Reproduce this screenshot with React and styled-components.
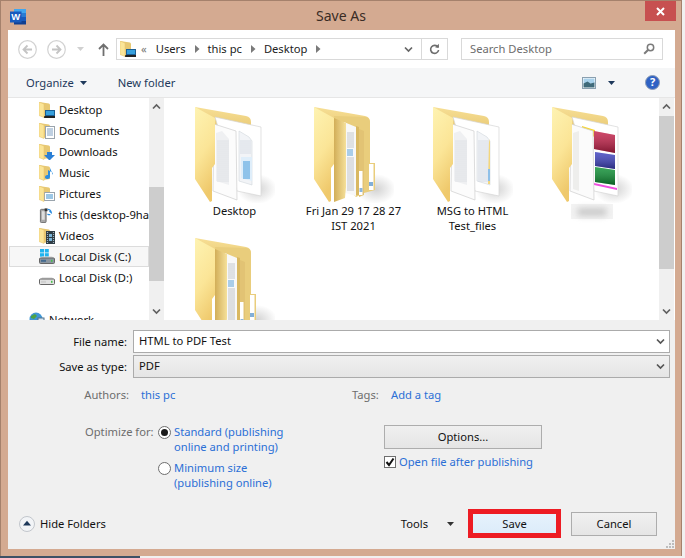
import React from 'react';
import styled, { createGlobalStyle } from 'styled-components';

const Global = createGlobalStyle`
  html, body { margin: 0; padding: 0; background: #f1f1f1; }
  body { font-family: "Noto Sans", "Open Sans", sans-serif; font-size: 11.2px; color: #111; }
`;

const Page = styled.div`width: 685px; height: 558px; overflow: hidden; background: #f1f1f1; display: flex; flex-direction: column;`;
const Win = styled.div`box-sizing: border-box; width: 682px; height: 556px; border: 1px solid #a5816c; border-bottom: 0; background: #d4aa91; display: flex; flex-direction: column;`;
const TaskSliver = styled.div`width: 140px; height: 2px; background: #3d5166;`;
const TitleBar = styled.div`position: relative; height: 29px; flex: none; display: flex; align-items: center; justify-content: center; padding-bottom: 1px; box-sizing: border-box;`;
const WordSlot = styled.div`position: absolute; left: 9px; top: 7px; width: 17px; height: 17px;`;
const Title = styled.div`font-size: 14px; color: #3a2c25; letter-spacing: 0;`;
const Close = styled.div`position: absolute; right: 5px; top: 0; width: 31px; height: 20px; background: #c75050; display: flex; align-items: center; justify-content: center;`;
const Content = styled.div`width: 667px; height: 519px; margin-left: 7px; background: #fff; display: flex; flex-direction: column; position: relative;`;

const NavRow = styled.div`height: 38px; flex: none; display: flex; align-items: center; padding: 0 12px 0 10px; box-sizing: border-box; background: #fff;`;
const RoundBtn = styled.div`width: 19px; height: 19px; margin-right: 10px; display: flex;`;
const NavCaret = styled.div`width: 7px; margin: 0 14px 0 1px; display: flex;`;
const UpSlot = styled.div`width: 11px; margin-right: 7px; display: flex;`;
const Address = styled.div`box-sizing: border-box; width: 332px; height: 22px; border: 1px solid #d9d9d9; display: flex; align-items: center; margin-right: 13px; padding-left: 3px;`;
const Crumbs = styled.div`flex: 1; display: flex; align-items: center; font-size: 11.2px; color: #222; padding-bottom: 1px;`;
const Crumb = styled.span`margin-right: 9px;`;
const CrumbIcon = styled.span`margin-right: 5px; display: flex;`;
const CrumbMore = styled.span`margin-right: 9px; color: #777;`;
const Chev = styled.span`margin-right: 8px; display: flex;`;
const Divider = styled.div`width: 25px; height: 20px; border-left: 1px solid #d9d9d9; display: flex; align-items: center; justify-content: center;`;
const AddrDrop = styled.div`width: 17px; display: flex; margin-right: 0;`;
const Search = styled.div`box-sizing: border-box; width: 202px; height: 22px; border: 1px solid #d9d9d9; display: flex; align-items: center; justify-content: space-between; padding: 0 7px 1px 8px; color: #6d6d6d; font-size: 11.2px;`;

const Toolbar = styled.div`height: 30px; flex: none; box-sizing: border-box; background: #f5f6f7; border-bottom: 1px solid #e6e6e6; display: flex; align-items: center; padding: 0 15px 0 18px; color: #1e395b; font-size: 11.2px;`;
const ToolItem = styled.div`display: flex; align-items: center; gap: 6px; margin-right: 31px;`;
const ToolRight = styled.div`margin-left: auto; display: flex; align-items: center;`;
const ViewCaret = styled.span`margin: 0 30px 0 12px; display: flex;`;

const Main = styled.div`height: 222px; flex: none; display: flex; overflow: hidden; background: #fff;`;
const NavPane = styled.div`width: 141px; flex: none; overflow: hidden; padding-top: 1px; box-sizing: border-box;`;
const NavItem = styled.div`box-sizing: border-box; height: 21px; display: flex; align-items: center; white-space: nowrap; overflow: hidden; margin-left: 1px;
  padding-left: ${p => p.$indent}px; gap: 4px; border: 1px solid ${p => (p.$sel ? '#dcdcdc' : 'transparent')}; background: ${p => (p.$sel ? '#f7f7f7' : 'transparent')}; border-right: ${p => (p.$sel ? '1px solid #dcdcdc' : '0')};`;
const NavGap = styled.div`height: 21px;`;
const Scroll = styled.div`width: 15px; flex: none; background: #f0f0f0; display: flex; flex-direction: column; align-items: stretch;`;
const ScrollBtn = styled.div`height: 17px; flex: none; display: flex; align-items: center; justify-content: center;`;
const Track = styled.div`flex: 1; position: relative;`;
const Thumb = styled.div`position: absolute; left: 0; right: 0; top: ${p => p.$top}px; height: ${p => p.$h}px; background: #cdcdcd;`;
const Files = styled.div`flex: 1; margin-left: 2px; padding: 9px 0 0 9px; display: grid; grid-template-columns: repeat(4, 119px); grid-auto-rows: 131px; overflow: hidden; align-content: start;`;
const FileCell = styled.div`display: flex; flex-direction: column; align-items: center;`;
const FileName = styled.div`width: 110px; text-align: center; line-height: 15px; margin-top: 0; color: #111;`;
const Redacted = styled.div`width: 42px; height: 15px; margin-top: 1px; background: #f3f3f3; display: flex; align-items: center; justify-content: center;`;
const Smudge = styled.div`width: 30px; height: 8px; border-radius: 4px; background: #c9c9c9; filter: blur(3px);`;
const LeftEdge = styled.div`width: 1px; flex: none; background: #fff;`;

const Form = styled.div`flex: 1; background: #f0f0f0; display: flex; flex-direction: column; padding: 10px 0 11px; box-sizing: border-box; position: relative;`;
const FieldRow = styled.div`display: flex; align-items: center; margin-bottom: 2px; height: 23px;`;
const FieldLabel = styled.div`width: 119px; text-align: right; margin-right: 6px; color: #111; padding-bottom: 1px;`;
const Field = styled.div`box-sizing: border-box; width: 537px; height: 23px; border: 1px solid #ababab; display: flex; align-items: center; justify-content: space-between; padding: 0 4px 2px 5px;
  background: ${p => (p.$select ? 'linear-gradient(#f0f0f0, #e5e5e5)' : '#fff')};`;
const FieldChev = styled.span`display: flex; margin-top: 2px;`;
const MetaRow = styled.div`display: grid; grid-template-columns: 121px 223px 39px auto; margin-top: 7px; height: 15px; line-height: 15px; align-items: center;`;
const MetaLabel = styled.div`color: #6d6d6d; text-align: ${p => (p.$left ? 'left' : 'right')};`;
const Link = styled.div`color: #2b6fd6; line-height: 15px; padding-left: ${p => p.$indent || 0}px;`;
const Options = styled.div`display: grid; grid-template-columns: 299px 158px; padding-left: 77px; margin-top: 23px;`;
const OptLeft = styled.div`display: grid; grid-template-columns: 73px 16px auto; row-gap: 6px; align-items: start; margin-top: -1px;`;
const OptLabel = styled.div`color: #6d6d6d; line-height: 15px;`;
const Radio = styled.div`box-sizing: border-box; width: 13px; height: 13px; margin-top: 2px; border-radius: 50%; border: 1px solid #6e6e6e; background: #fff; display: flex; align-items: center; justify-content: center;`;
const RadioDot = styled.div`width: 7px; height: 7px; border-radius: 50%; background: #1a1a1a;`;
const OptRight = styled.div`display: flex; flex-direction: column;`;
const Button = styled.div`box-sizing: border-box; height: 24px; width: ${p => p.$w}px; padding-bottom: 1px; border: 1px solid #adadad; background: linear-gradient(#f0f0f0, #e5e5e5); display: flex; align-items: center; justify-content: center; color: #111;`;
const CheckRow = styled.div`display: flex; align-items: center; gap: 3px; margin-top: 5px; height: 15px;`;
const Check = styled.div`box-sizing: border-box; width: 12px; height: 12px; margin-top: 1px; border: 1px solid #6e6e6e; background: #fff; display: flex; align-items: center; justify-content: center;`;
const Bottom = styled.div`margin-top: auto; display: flex; align-items: center; padding: 0 18px 0 11px;`;
const HideFolders = styled.div`display: flex; align-items: center; gap: 5px; color: #111;`;
const Tools = styled.div`margin-left: auto; display: flex; align-items: center; gap: 19px; margin-right: 14px; color: #111;`;
const RedFrame = styled.div`border: 5px solid #ed1c24; margin-right: 10px; display: flex;`;
const SaveBtn = styled.div`box-sizing: border-box; width: 83px; height: 19px; background: linear-gradient(#e6f2fc, #dcecfa); display: flex; align-items: center; justify-content: center; color: #111;`;
const Grip = styled.div`position: absolute; right: 1px; bottom: 1px; width: 8px; height: 8px; display: flex;`;
const DefsHolder = styled.svg`position: absolute; width: 0; height: 0;`;

const Tri = ({ color = '#1e395b', w = 7, h = 4 }) => (
  <svg width={w} height={h} viewBox="0 0 7 4"><path d="M0 0h7L3.5 4z" fill={color} /></svg>
);
const Caret = () => (
  <svg width="5" height="8" viewBox="0 0 5 8"><path d="M0 0l4.5 4L0 8z" fill="#7a7a7a" /></svg>
);
const ChevDown = ({ color = '#555' }) => (
  <svg width="9" height="7" viewBox="0 0 9 7"><path d="M1 1.5l3.5 3.5L8 1.5" fill="none" stroke={color} strokeWidth="1.7" /></svg>
);
const ChevUp = () => (
  <svg width="9" height="7" viewBox="0 0 9 7"><path d="M1 5.5L4.5 2 8 5.5" fill="none" stroke="#606060" strokeWidth="1.7" /></svg>
);
const CircleArrow = ({ flip }) => (
  <svg width="19" height="19" viewBox="0 0 19 19">
    <circle cx="9.5" cy="9.5" r="8.8" fill="#fff" stroke="#d2d2d2" strokeWidth="1.2" />
    <path d={flip ? 'M5 9.5h8M9.5 5.5l4 4-4 4' : 'M14 9.5H6M9.5 5.5l-4 4 4 4'} fill="none" stroke="#c4c4c4" strokeWidth="1.8" />
  </svg>
);
const Up = () => (
  <svg width="11" height="13" viewBox="0 0 11 13"><path d="M5.5 13V2M1 6l4.5-4.5L10 6" fill="none" stroke="#6f6f6f" strokeWidth="1.8" /></svg>
);
const Refresh = () => (
  <svg width="11" height="12" viewBox="0 0 11 12">
    <path d="M9 4.2A4 4 0 1 0 9.6 7" fill="none" stroke="#6e6e6e" strokeWidth="1.6" />
    <path d="M6.2 4.6L10 4.8 9.8 .8z" fill="#6e6e6e" />
  </svg>
);
const Magnifier = () => (
  <svg width="12" height="12" viewBox="0 0 12 12">
    <circle cx="7.5" cy="4.5" r="3.2" fill="none" stroke="#7b7b7b" strokeWidth="1.5" />
    <path d="M5 7L1.2 10.8" stroke="#7b7b7b" strokeWidth="2" />
  </svg>
);
const ViewIcon = () => (
  <svg width="14" height="12" viewBox="0 0 14 12">
    <rect x=".5" y=".5" width="13" height="11" fill="#fff" stroke="#8aa0b0" />
    <rect x="1.5" y="1.5" width="11" height="5" fill="#a9d2ec" />
    <path d="M1.5 6.5l4-2 3 2 4-1v5h-11z" fill="#3f6a7a" />
  </svg>
);
const Help = () => (
  <svg width="15" height="15" viewBox="0 0 15 15">
    <circle cx="7.5" cy="7.5" r="7" fill="#2f62c4" stroke="#8d9db5" />
    <text x="7.5" y="11.4" textAnchor="middle" fontSize="11" fontWeight="700" fontFamily="Noto Sans" fill="#fff">?</text>
  </svg>
);
const Word = () => (
  <svg width="17" height="17" viewBox="0 0 17 17">
    <rect x="4" y="1" width="12" height="4" fill="#41a5ee" />
    <rect x="4" y="5" width="12" height="4" fill="#2b7cd3" />
    <rect x="4" y="9" width="12" height="4" fill="#185abd" />
    <rect x="4" y="13" width="12" height="3.5" fill="#103f91" />
    <rect x="0" y="3.5" width="11.5" height="11" fill="#185abd" />
    <text x="5.8" y="12.3" textAnchor="middle" fontSize="9.5" fontWeight="700" fontFamily="Liberation Sans" fill="#fff">W</text>
  </svg>
);

const Defs = () => (
  <DefsHolder aria-hidden="true">
    <defs>
      <linearGradient id="flap" x1="0" y1="0" x2="0.3" y2="1">
        <stop offset="0" stopColor="#fef3b2" />
        <stop offset="0.55" stopColor="#fbe597" />
        <stop offset="1" stopColor="#efc96c" />
      </linearGradient>
      <linearGradient id="backf" x1="0" y1="0" x2="0" y2="1">
        <stop offset="0" stopColor="#f7df95" />
        <stop offset="1" stopColor="#e4c26a" />
      </linearGradient>
      <linearGradient id="layer" x1="0" y1="0" x2="1" y2="0">
        <stop offset="0" stopColor="#d2ae58" />
        <stop offset="1" stopColor="#f5e09a" />
      </linearGradient>
      <linearGradient id="roll" x1="0" y1="0" x2="0" y2="1">
        <stop offset="0" stopColor="#fff" stopOpacity="0.18" />
        <stop offset="1" stopColor="#000" stopOpacity="0.35" />
      </linearGradient>
      <radialGradient id="shade">
        <stop offset="0" stopColor="#8a8a8a" stopOpacity="0.38" />
        <stop offset="1" stopColor="#8a8a8a" stopOpacity="0" />
      </radialGradient>
    </defs>
  </DefsHolder>
);

const Lines = ({ x, y, w, n, step = 2, color = '#cdd3da' }) => (
  <g stroke={color} strokeWidth="0.9">
    {Array.from({ length: n }, (_, i) => (
      <path key={i} d={`M${x} ${y + i * step}h${w}`} />
    ))}
  </g>
);

const Flap = () => <path d="M0 0L20 11V57L17 61V94L15 95L0 72Z" fill="url(#flap)" />;
const BackF = () => <path d="M0 0L51 9Q56 10 56 15V30H20Z" fill="url(#backf)" />;
const Shadow = () => <ellipse cx="62" cy="82" rx="20" ry="15" fill="url(#shade)" />;

const DocPair = ({ accent }) => (
  <>
    <path d="M20 10L66 20V89L42 84Z" fill="#fff" stroke="#d6d6d6" strokeWidth="0.7" />
    <path d="M44 24L54 30 57 34V78L44 74Z" fill="#f2f4f7" stroke="#d0d6dc" strokeWidth="0.6" />
    {accent ? (
      <>
        <Lines x={45} y={34} w={11} n={21} color="#d5dae2" />
        <path d="M56 32l1 3v42h-2z" fill="#f3d67c" />
        <rect x="55" y="62" width="2" height="12" fill="#8fc0e8" />
      </>
    ) : (
      <>
        <Lines x={45} y={34} w={11} n={7} color="#d5dae2" />
        <path d="M46 50h11v24l-11-3z" fill="#dfeefa" />
        <rect x="48" y="54" width="7" height="18" fill="#8fc3ea" />
      </>
    )}
    <path d="M19 17L41 24 42 93 18 84Z" fill="#fcfcfc" stroke="#cfcfcf" strokeWidth="0.7" />
    <path d="M21 26L27 24 34 32V78L21 74Z" fill="#eff0f2" />
    <Lines x={22} y={34} w={12} n={21} color="#dcdfe3" />
  </>
);

const Stack = () => (
  <>
    <path d="M20 9L52 10Q56 11 56 16V56H61V83L50 86 42 90 22 70Z" fill="#e9cd7c" />
    <path d="M42 19L45 20V88H42Z" fill="#d9b862" />
    <path d="M45 22L50 24V88L45 90Z" fill="#e2c374" />
    <rect x="45" y="64" width="3.5" height="24" fill="#fff" />
    <rect x="45.5" y="81" width="3" height="4" fill="#8db6dc" />
    <rect x="55" y="57" width="4.5" height="26" fill="#fff" />
    <rect x="55" y="75" width="4" height="4" fill="#82afd8" />
    <path d="M30 15L42 20V89L28 85Z" fill="#f8f8f8" />
    <Lines x={33} y={26} w={7} n={8} color="#bfc4ca" />
    <rect x="33" y="42" width="6" height="7" fill="#a9cde9" />
    <Lines x={33} y={51} w={7} n={17} color="#bcc0c5" />
    <path d="M20 11L32 16V80L31 91 20 95Z" fill="url(#layer)" />
  </>
);

const Rar = () => (
  <>
    <path d="M20 10L66 20V89L42 84Z" fill="#fff" stroke="#d6d6d6" strokeWidth="0.7" />
    <path d="M30 19L43 23V30L30 26Z" fill="#f6d533" />
    <path d="M42 24L63 28V46L42 42Z" fill="#c41f48" />
    <path d="M42 24L63 28V46L42 42Z" fill="url(#roll)" />
    <path d="M43 45L63 48V62L43 59Z" fill="#3d41bf" />
    <path d="M43 45L63 48V62L43 59Z" fill="url(#roll)" />
    <path d="M43 60L63 63V78L43 75Z" fill="#0c8f33" />
    <path d="M43 60L63 63V78L43 75Z" fill="url(#roll)" />
    <path d="M42 76L65 81V83L42 78Z" fill="#ef4fe0" />
    <path d="M19 17L41 24 42 93 18 84Z" fill="#fbfbfb" stroke="#cfcfcf" strokeWidth="0.7" />
    <rect x="21" y="46" width="3" height="12" fill="#c8c8c8" />
    <path d="M21 26l6-2v60l-6-2z" fill="#eeeeec" />
  </>
);

const BigFolder = ({ kind }) => (
  <svg width="80" height="96" viewBox="0 0 80 96">
    <Shadow />
    <BackF />
    {kind === 'docs' && <DocPair />}
    {kind === 'msg' && <DocPair accent />}
    {kind === 'stack' && <Stack />}
    {kind === 'rar' && <Rar />}
    <Flap />
  </svg>
);

const overlays = {
  desktop: (
    <>
      <rect x="6" y="8" width="10" height="7" fill="#1c5f94" />
      <rect x="7" y="9" width="8" height="4" fill="#37a0dd" />
      <rect x="5" y="14" width="11" height="2" fill="#222" />
    </>
  ),
  docs: (
    <>
      <rect x="6.5" y="3.5" width="9" height="12" fill="#fff" stroke="#9aa4ad" />
      <path d="M8 6h6M8 8h6M8 10h6M8 12h6" stroke="#7fa0c4" />
    </>
  ),
  down: <path d="M8 8h5v3h3l-5.5 5.5L5 11h3z" fill="#2a7fd6" />,
  music: <path d="M11 3v9a2.5 2 0 1 1-2-2V5l5 3v2z" fill="#2a8ce0" />,
  pictures: (
    <>
      <rect x="5.5" y="6.5" width="10" height="8" fill="#fff" stroke="#9aa4ad" />
      <rect x="7" y="8" width="7" height="5" fill="#9cc7e6" />
    </>
  ),
  videos: (
    <>
      <rect x="7" y="3" width="9" height="13" fill="#2f3d45" />
      <path d="M8.5 4v11M14.5 4v11" stroke="#9fb4bf" strokeDasharray="1 1" strokeWidth="1.2" />
      <rect x="10" y="6" width="3" height="3" fill="#79b4d8" />
      <rect x="10" y="10" width="3" height="3" fill="#79b4d8" />
    </>
  ),
};

const SmallFolder = ({ kind }) => (
  <svg width="16" height="16" viewBox="0 0 16 16">
    <path d="M0 0L10 1.5Q11 2 11 3V14L4 15Z" fill="#e7c873" />
    {overlays[kind]}
    <path d="M0 0L5 2V15.5L0 13.5Z" fill="#fbe597" stroke="#e5c36c" strokeWidth="0.5" />
  </svg>
);
const Phone = () => (
  <svg width="16" height="16" viewBox="0 0 16 16">
    <rect x="1.5" y="2" width="6" height="14" rx="1" fill="#a8a8a8" stroke="#6d6d6d" />
    <rect x="3" y="4" width="3" height="9" fill="#dedede" />
    <rect x="6" y="1" width="3" height="3" fill="#333" />
    <path d="M9 2a4 4 0 0 1 4 3.500L11 4M9 7a3 3 0 0 0 3 .5" fill="none" stroke="#2a8ce0" strokeWidth="1.3" />
  </svg>
);
const Drive = ({ win }) => (
  <svg width="16" height="16" viewBox="0 0 16 16">
    {win && (
      <g fill="#1fb3ee">
        <rect x="1" y="0" width="4" height="3.500" />
        <rect x="5.800" y="0" width="4" height="3.500" />
        <rect x="1" y="4.200" width="4" height="3.500" />
        <rect x="5.800" y="4.200" width="4" height="3.500" />
      </g>
    )}
    <path d="M2 9L3 7.500H13L15 9Z" fill="#d0d0d0" />
    <rect x="0.500" y="9" width="15" height="5.500" rx="1" fill={win ? '#8b96a0' : '#e1e1e1'} stroke="#666" />
    <rect x="2" y="10.800" width="5" height="2" fill={win ? '#446a8f' : '#cfcfcf'} />
    <rect x="12" y="10.800" width="1.500" height="2" fill="#47c14a" />
  </svg>
);
const Globe = () => (
  <svg width="16" height="16" viewBox="0 0 16 16">
    <circle cx="7" cy="7" r="6.500" fill="#3f97d6" />
    <path d="M2 4l4-2 2 2-3 3-3-1zM8 8l3 1-1 4-2-1z" fill="#4da345" />
    <rect x="9" y="6" width="6" height="5" fill="#d8e6f0" stroke="#52738c" />
  </svg>
);

const navItems = [
  { label: 'Desktop', icon: <SmallFolder kind="desktop" /> },
  { label: 'Documents', icon: <SmallFolder kind="docs" /> },
  { label: 'Downloads', icon: <SmallFolder kind="down" /> },
  { label: 'Music', icon: <SmallFolder kind="music" /> },
  { label: 'Pictures', icon: <SmallFolder kind="pictures" /> },
  { label: 'this (desktop-9ha', icon: <Phone /> },
  { label: 'Videos', icon: <SmallFolder kind="videos" /> },
  { label: 'Local Disk (C:)', icon: <Drive win />, sel: true },
  { label: 'Local Disk (D:)', icon: <Drive /> },
];

const fileItems = [
  { kind: 'docs', lines: ['Desktop'] },
  { kind: 'stack', lines: ['Fri Jan 29 17 28 27', 'IST 2021'] },
  { kind: 'msg', lines: ['MSG to HTML', 'Test_files'] },
  { kind: 'rar', blurred: true },
  { kind: 'stack', lines: [] },
];

const ScrollBar = ({ top, h }) => (
  <Scroll>
    <ScrollBtn><ChevUp /></ScrollBtn>
    <Track><Thumb $top={top} $h={h} /></Track>
    <ScrollBtn><ChevDown color="#606060" /></ScrollBtn>
  </Scroll>
);

export default function App() {
  return (
    <Page>
      <Global />
      <Defs />
      <Win>
        <TitleBar>
          <WordSlot><Word /></WordSlot>
          <Title>Save As</Title>
          <Close>
            <svg width="9" height="9" viewBox="0 0 9 9"><path d="M1 1l7 7M8 1L1 8" stroke="#fff" strokeWidth="2" /></svg>
          </Close>
        </TitleBar>
        <Content>
          <NavRow>
            <RoundBtn><CircleArrow /></RoundBtn>
            <RoundBtn><CircleArrow flip /></RoundBtn>
            <NavCaret><Tri color="#d0d0d0" /></NavCaret>
            <UpSlot><Up /></UpSlot>
            <Address>
              <Crumbs>
                <CrumbIcon><SmallFolder kind="desktop" /></CrumbIcon>
                <CrumbMore>«</CrumbMore>
                <Crumb>Users</Crumb>
                <Chev><Caret /></Chev>
                <Crumb>this pc</Crumb>
                <Chev><Caret /></Chev>
                <Crumb>Desktop</Crumb>
                <Chev><Caret /></Chev>
              </Crumbs>
              <AddrDrop><ChevDown color="#666" /></AddrDrop>
              <Divider><Refresh /></Divider>
            </Address>
            <Search>
              <span>Search Desktop</span>
              <Magnifier />
            </Search>
          </NavRow>
          <Toolbar>
            <ToolItem>Organize <Tri /></ToolItem>
            <ToolItem>New folder</ToolItem>
            <ToolRight>
              <ViewIcon />
              <ViewCaret><Tri /></ViewCaret>
              <Help />
            </ToolRight>
          </Toolbar>
          <Main>
            <NavPane>
              {navItems.map(n => (
                <NavItem key={n.label} $indent={29} $sel={n.sel}>{n.icon}<span>{n.label}</span></NavItem>
              ))}
              <NavGap />
              <NavItem $indent={19}><Globe /><span>Network</span></NavItem>
            </NavPane>
            <ScrollBar top={72} h={94} />
            <Files>
              {fileItems.map((f, i) => (
                <FileCell key={i}>
                  <BigFolder kind={f.kind} />
                  {f.blurred ? <Redacted><Smudge /></Redacted> : (
                    <FileName>{(f.lines || []).map(l => <div key={l}>{l}</div>)}</FileName>
                  )}
                </FileCell>
              ))}
            </Files>
            <ScrollBar top={1} h={153} />
            <LeftEdge />
          </Main>
          <Form>
            <FieldRow>
              <FieldLabel>File name:</FieldLabel>
              <Field><span>HTML to PDF Test</span><FieldChev><ChevDown /></FieldChev></Field>
            </FieldRow>
            <FieldRow>
              <FieldLabel>Save as type:</FieldLabel>
              <Field $select><span>PDF</span><FieldChev><ChevDown /></FieldChev></Field>
            </FieldRow>
            <MetaRow>
              <MetaLabel>Authors:</MetaLabel>
              <Link $indent={12}>this pc</Link>
              <MetaLabel $left>Tags:</MetaLabel>
              <Link>Add a tag</Link>
            </MetaRow>
            <Options>
              <OptLeft>
                <OptLabel>Optimize for:</OptLabel>
                <Radio><RadioDot /></Radio>
                <Link>Standard (publishing<br />online and printing)</Link>
                <span />
                <Radio />
                <Link>Minimum size<br />(publishing online)</Link>
              </OptLeft>
              <OptRight>
                <Button $w={158}>Options...</Button>
                <CheckRow>
                  <Check>
                    <svg width="10" height="10" viewBox="0 0 10 10"><path d="M1.500 5l2.500 3L8.500 1.500" fill="none" stroke="#111" strokeWidth="2" /></svg>
                  </Check>
                  <Link>Open file after publishing</Link>
                </CheckRow>
              </OptRight>
            </Options>
            <Bottom>
              <HideFolders>
                <svg width="16" height="16" viewBox="0 0 16 16">
                  <circle cx="8" cy="8" r="7.500" fill="#f2f4f7" stroke="#c2c6cc" />
                  <path d="M8 4.800L12 9.500H4z" fill="#1e395b" />
                </svg>
                Hide Folders
              </HideFolders>
              <Tools>Tools <Tri color="#333" /></Tools>
              <RedFrame><SaveBtn>Save</SaveBtn></RedFrame>
              <Button $w={86}>Cancel</Button>
            </Bottom>
            <Grip>
              <svg width="8" height="8" viewBox="0 0 8 8" fill="#bdbdbd">
                <rect x="6" y="0" width="2" height="2" />
                <rect x="3" y="3" width="2" height="2" /><rect x="6" y="3" width="2" height="2" />
                <rect x="0" y="6" width="2" height="2" /><rect x="3" y="6" width="2" height="2" /><rect x="6" y="6" width="2" height="2" />
              </svg>
            </Grip>
          </Form>
        </Content>
      </Win>
      <TaskSliver />
    </Page>
  );
}
